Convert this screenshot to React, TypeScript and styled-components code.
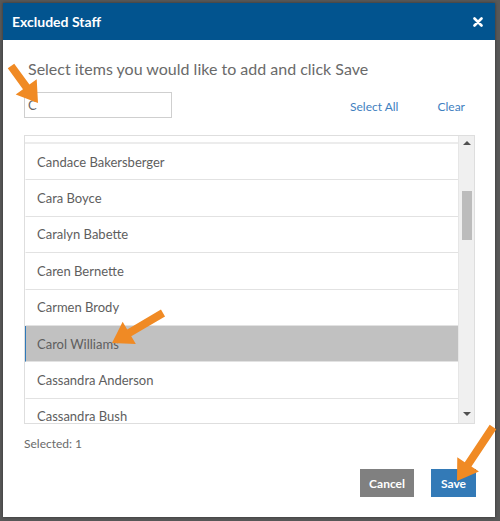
import React from 'react'
import styled, { createGlobalStyle } from 'styled-components'

const GlobalStyle = createGlobalStyle`
  html, body {
    margin: 0;
    padding: 0;
    background: #585858;
  }
  body {
    font-family: Lato, 'Open Sans', sans-serif;
  }
`

const Backdrop = styled.div`
  position: relative;
  width: 500px;
  height: 521px;
  padding: 3px 5px 4px 3px;
  box-sizing: border-box;
  background: #585858;
`

const Modal = styled.div`
  width: 492px;
  height: 514px;
  background: #fff;
  display: flex;
  flex-direction: column;
  box-shadow: 0 0 3px rgba(0, 0, 0, 0.4);
`

const Header = styled.div`
  height: 37px;
  background: #02548f;
  display: flex;
  align-items: center;
  justify-content: space-between;
  padding: 0 12px 0 9px;
  color: #fff;
`

const Title = styled.h2`
  margin: 0;
  font-size: 14px;
  font-weight: 700;
`

const Close = styled.svg`
  display: block;
`

const Body = styled.div`
  flex: 1;
  display: flex;
  flex-direction: column;
  padding: 0 20px 0 21px;
`

const Prompt = styled.div`
  margin: 18px 0 0 4px;
  font-size: 16px;
  color: #6a6a6a;
  line-height: 22px;
`

const SearchRow = styled.div`
  display: flex;
  align-items: center;
  margin-top: 12px;
  height: 26px;
`

const SearchBox = styled.div`
  width: 143px;
  height: 24px;
  border: 1px solid #cfcfcf;
  font-size: 13px;
  color: #666;
  padding-left: 3px;
  box-sizing: content-box;
  display: flex;
  align-items: center;
`

const LinkButton = styled.span<{ $gap: number }>`
  margin-left: ${p => p.$gap}px;
  font-size: 12px;
  color: #3f7fbf;
  margin-top: 2px;
`

const List = styled.div`
  margin-top: 17px;
  height: 287px;
  border: 1px solid #dedede;
  display: flex;
`

const Items = styled.div`
  flex: 1;
  overflow: hidden;
  display: flex;
  flex-direction: column;
`

const Partial = styled.div`
  height: 6px;
  flex: 0 0 auto;
  border-bottom: 2px solid #ececec;
`

const Item = styled.div<{ $selected?: boolean }>`
  flex: 0 0 auto;
  height: 35.4px;
  border-bottom: 1px solid #e2e2e2;
  border-left: 1px solid ${p => (p.$selected ? '#2f79b9' : 'transparent')};
  background: ${p => (p.$selected ? '#c1c1c1' : '#fff')};
  display: flex;
  align-items: center;
  padding-left: 11px;
  font-size: 13px;
  color: #5e5e5e;
`

const Scrollbar = styled.div`
  width: 15px;
  background: #f0f0f0;
  border-left: 1px solid #e6e6e6;
  display: flex;
  flex-direction: column;
  align-items: center;
`

const ScrollArrow = styled.div<{ $down?: boolean }>`
  width: 0;
  height: 0;
  border-left: 4px solid transparent;
  border-right: 4px solid transparent;
  ${p =>
    p.$down
      ? 'border-top: 4px solid #505050; margin-top: auto; margin-bottom: 7px;'
      : 'border-bottom: 4px solid #505050; margin-top: 5px;'}
`

const Thumb = styled.div`
  width: 10px;
  height: 49px;
  background: #bcbcbc;
  margin-top: 46px;
`

const Selected = styled.div`
  margin-top: 12px;
  font-size: 12px;
  color: #6a6a6a;
`

const Footer = styled.div`
  display: flex;
  justify-content: flex-end;
  gap: 17px;
  margin-top: 18px;
  margin-right: -1px;
`

const Button = styled.button<{ $primary?: boolean }>`
  height: 28px;
  border: none;
  padding: 0 ${p => (p.$primary ? 10 : 9)}px;
  background: ${p => (p.$primary ? '#337ab7' : '#808080')};
  color: #fff;
  font-family: Lato, sans-serif;
  font-size: 12px;
  font-weight: 700;
`

const Overlay = styled.svg`
  position: absolute;
  inset: 0;
  pointer-events: none;
`

const names = [
  'Candace Bakersberger',
  'Cara Boyce',
  'Caralyn Babette',
  'Caren Bernette',
  'Carmen Brody',
  'Carol Williams',
  'Cassandra Anderson',
  'Cassandra Bush',
]

const arrowPoints = (tx: number, ty: number, hx: number, hy: number) => {
  const dx = hx - tx
  const dy = hy - ty
  const len = Math.hypot(dx, dy)
  const ux = dx / len
  const uy = dy / len
  const nx = -uy
  const ny = ux
  const headLen = 20
  const headW = 13
  const shaftW = 4
  const bx = hx - ux * headLen
  const by = hy - uy * headLen
  const pts = [
    [tx + nx * shaftW, ty + ny * shaftW],
    [bx + nx * shaftW, by + ny * shaftW],
    [bx + nx * headW, by + ny * headW],
    [hx, hy],
    [bx - nx * headW, by - ny * headW],
    [bx - nx * shaftW, by - ny * shaftW],
    [tx - nx * shaftW, ty - ny * shaftW],
  ]
  return pts.map(p => p.join(',')).join(' ')
}

const App = () => {
  return (
    <>
      <GlobalStyle />
      <Backdrop>
        <Modal>
          <Header>
            <Title>Excluded Staff</Title>
            <Close width="10" height="10" viewBox="0 0 10 10">
              <path
                d="M1.5 1.5 L8.5 8.5 M8.5 1.5 L1.5 8.5"
                stroke="#fff"
                strokeWidth="2.6"
                strokeLinecap="round"
              />
            </Close>
          </Header>
          <Body>
            <Prompt>Select items you would like to add and click Save</Prompt>
            <SearchRow>
              <SearchBox>C</SearchBox>
              <LinkButton $gap={178}>Select All</LinkButton>
              <LinkButton $gap={39}>Clear</LinkButton>
            </SearchRow>
            <List>
              <Items>
                <Partial />
                {names.map(n => (
                  <Item key={n} $selected={n === 'Carol Williams'}>
                    {n}
                  </Item>
                ))}
              </Items>
              <Scrollbar>
                <ScrollArrow />
                <Thumb />
                <ScrollArrow $down />
              </Scrollbar>
            </List>
            <Selected>Selected: 1</Selected>
            <Footer>
              <Button>Cancel</Button>
              <Button $primary>Save</Button>
            </Footer>
          </Body>
        </Modal>
        <Overlay width="500" height="521" viewBox="0 0 500 521">
          <polygon fill="#f08a24" points={arrowPoints(11, 66, 38, 103)} />
          <polygon fill="#f08a24" points={arrowPoints(163, 313, 112, 343)} />
          <polygon fill="#f08a24" points={arrowPoints(493, 427, 457, 481)} />
        </Overlay>
      </Backdrop>
    </>
  )
}

export default App
